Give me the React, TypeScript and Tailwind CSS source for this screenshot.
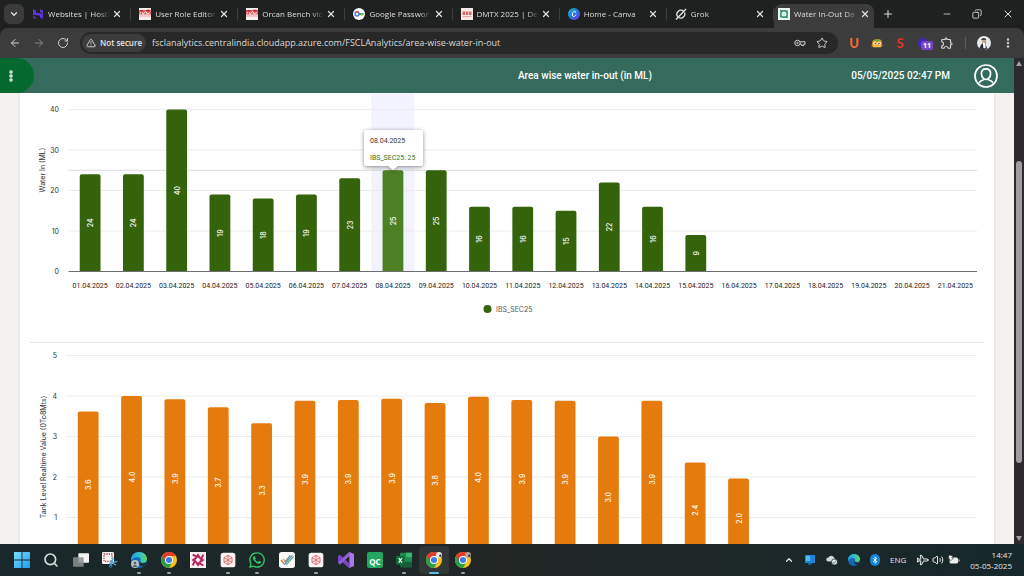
import React from 'react';
import {
  ArrowLeft,
  ArrowRight,
  ChevronDown,
  ChevronUp,
  Copy,
  EllipsisVertical,
  Minus,
  Plane,
  Plus,
  RotateCw,
  Search,
  Star,
  TriangleAlert,
  Volume2,
  X,
} from 'lucide-react';
import { FaBluetoothB, FaWhatsapp } from 'react-icons/fa';
import { MdOutlineExtension } from 'react-icons/md';

interface IconProps {
  className?: string;
}

/* ---------- icons ---------- */

const HostingerIcon: React.FC<IconProps> = ({ className }) => (
  <svg viewBox="0 0 24 24" className={className}>
    <path d="M2 2l6 3v5h7l6 4H2zM22 22l-6-3v-4H9l-6-4h19z" fill="#5b35d5" />
    <path d="M16 2l6 3v6l-6-3zM2 16l6 3v3l-6-3z" fill="#5b35d5" />
  </svg>
);

const OrcanIcon: React.FC<IconProps> = ({ className }) => (
  <svg viewBox="0 0 24 24" className={className}>
    <rect width="24" height="24" fill="#f7eeee" />
    <path d="M0 4h24v9H0z" fill="#e25a5a" />
    <path d="M2 11c2-6 5-6 5-2s3 3 4 0 4-2 4 1 4 1 7-1" stroke="#fff" strokeWidth="2" fill="none" />
    <path d="M3 6h5M15 5h6" stroke="#c01d1d" strokeWidth="3" />
    <path d="M0 15h24v2H0z" fill="#eda3a3" />
  </svg>
);

const PasswordIcon: React.FC<IconProps> = ({ className }) => (
  <svg viewBox="0 0 24 24" className={className}>
    <circle cx="12" cy="12" r="12" fill="#fff" />
    <circle cx="8" cy="12" r="4" fill="none" stroke="#4285f4" strokeWidth="3" />
    <path d="M5 8.500a5 5 0 0 1 6 0" stroke="#ea4335" strokeWidth="3" fill="none" />
    <path d="M12 12h9" stroke="#34a853" strokeWidth="4" />
    <path d="M17 12v4" stroke="#fbbc05" strokeWidth="3" />
  </svg>
);

const DmtxIcon: React.FC<IconProps> = ({ className }) => (
  <svg viewBox="0 0 24 24" className={className}>
    <rect width="24" height="24" fill="#f7e9e7" />
    <path d="M3 7h5v7H3zM9.500 7h5v7h-5zM16 7h5v7h-5z" fill="#dc6a66" />
    <path d="M3 17h18" stroke="#e6a8a4" strokeWidth="2" />
  </svg>
);

const CanvaIcon: React.FC<IconProps> = ({ className }) => (
  <svg viewBox="0 0 24 24" className={className}>
    <defs>
      <linearGradient id="canva" x1="0" y1="0" x2="1" y2="1">
        <stop offset="0" stopColor="#12bfd0" />
        <stop offset="0.5" stopColor="#2776e0" />
        <stop offset="1" stopColor="#7a2be6" />
      </linearGradient>
    </defs>
    <circle cx="12" cy="12" r="12" fill="url(#canva)" />
    <path d="M15.500 9c.8-3-3.500-3.500-5.500 0s-2 8 1.500 8c2 0 3.500-1.500 4.300-3" stroke="#fff" strokeWidth="2" fill="none" strokeLinecap="round" />
  </svg>
);

const GrokIcon: React.FC<IconProps> = ({ className }) => (
  <svg viewBox="0 0 24 24" className={className} fill="none" stroke="#e4e4e4" strokeWidth="2.600">
    <path d="M17 6.500A8 8 0 0 0 5.500 17.500M7.500 19A8 8 0 0 0 19 9" />
    <path d="M2 23L22 2" />
  </svg>
);

const WaterIcon: React.FC<IconProps> = ({ className }) => (
  <svg viewBox="0 0 24 24" className={className}>
    <rect width="24" height="24" fill="#eef6f3" />
    <circle cx="12" cy="12" r="6.500" fill="none" stroke="#2f8f6d" strokeWidth="3" />
    <path d="M4 5l4 1M20 19l-4-1M19 5l-2 3M5 19l2-3" stroke="#2f8f6d" strokeWidth="3" />
    <circle cx="12" cy="12" r="3" fill="#cfe8df" />
  </svg>
);

const KeyIcon: React.FC<IconProps> = ({ className }) => (
  <svg viewBox="0 0 24 16" className={className} fill="none" stroke="currentColor" strokeWidth="2">
    <circle cx="7" cy="8" r="5.500" />
    <circle cx="7" cy="8" r="1.500" />
    <path d="M12.500 5.500H22v5h-2.500V13h-4v-2.500h-3" />
  </svg>
);

const OrangeFaceIcon: React.FC<IconProps> = ({ className }) => (
  <svg viewBox="0 0 24 24" className={className}>
    <path d="M3 8c2-4 15-5 18-1l2 12H1z" fill="#f08a24" />
    <path d="M4 8c3-4 13-4 17-1-4 2-12 2-17 1z" fill="#6fae3c" />
    <circle cx="8" cy="13" r="4" fill="#ffe9b0" />
    <circle cx="16" cy="13" r="4" fill="#ffe9b0" />
    <circle cx="9" cy="13" r="1.700" fill="#b3361c" />
    <circle cx="16" cy="13" r="1.700" fill="#b3361c" />
    <path d="M4 19h16" stroke="#f7c948" strokeWidth="3" />
  </svg>
);

const AvatarIcon: React.FC<IconProps> = ({ className }) => (
  <svg viewBox="0 0 24 24" className={className}>
    <circle cx="12" cy="12" r="12" fill="#e6e8ec" />
    <path d="M4 21a12 12 0 0 0 14 1l-4-8 2-3-6 1-3 3z" fill="#2b2f3d" />
    <path d="M10 12h4l1 9h-4z" fill="#fff" />
    <circle cx="12" cy="8" r="4" fill="#c8a98e" />
    <path d="M7 7c1-5 8-5 9 0z" fill="#4a3a33" />
  </svg>
);

const UserIcon: React.FC<IconProps> = ({ className }) => (
  <svg viewBox="0 0 24 24" className={className} fill="none" stroke="#fff" strokeWidth="1.700">
    <circle cx="12" cy="12" r="11" />
    <path d="M12 4.800c-3 0-4.600 2-4.600 4.800 0 2 .8 3.700 2 4.700v1.500c-2 .6-3.600 1.400-4.400 3.200M12 4.800c3 0 4.600 2 4.600 4.800 0 2-.8 3.700-2 4.700v1.500c2 .6 3.600 1.400 4.400 3.200M9.400 14.300c1.500 1.300 3.700 1.300 5.200 0" />
  </svg>
);

const WindowsIcon: React.FC<IconProps> = ({ className }) => (
  <svg viewBox="0 0 24 24" className={className}>
    <defs>
      <linearGradient id="win" x1="0" y1="0" x2="1" y2="1">
        <stop offset="0" stopColor="#7fdcfb" />
        <stop offset="1" stopColor="#1c9df0" />
      </linearGradient>
    </defs>
    <path d="M0 0h11.300v11.300H0zM12.700 0H24v11.300H12.700zM0 12.700h11.300V24H0zM12.700 12.700H24V24H12.700z" fill="url(#win)" />
  </svg>
);

const TaskViewIcon: React.FC<IconProps> = ({ className }) => (
  <svg viewBox="0 0 24 24" className={className}>
    <rect x="8" y="2" width="16" height="14" rx="1" fill="#f2f2f2" />
    <rect x="0" y="8" width="16" height="14" rx="1" fill="#8b8f90" fillOpacity="0.85" />
  </svg>
);

const SnipIcon: React.FC<IconProps> = ({ className }) => (
  <svg viewBox="0 0 24 24" className={className}>
    <rect x="0" y="0" width="18" height="18" rx="2" fill="#f3f3f3" />
    <rect x="3" y="3" width="12" height="11" fill="none" stroke="#c94343" strokeWidth="2" strokeDasharray="2 1.500" />
    <path d="M13 21l4-13M21 20l-9-7M11 17l12-3" stroke="#4fa6cf" strokeWidth="2" />
    <circle cx="13" cy="21" r="2" fill="none" stroke="#2f86b8" strokeWidth="1.500" />
  </svg>
);

const EdgeIcon: React.FC<IconProps> = ({ className }) => (
  <svg viewBox="0 0 24 24" className={className}>
    <defs>
      <linearGradient id="edge" x1="0" y1="0" x2="1" y2="0">
        <stop offset="0" stopColor="#2a9be8" />
        <stop offset="0.6" stopColor="#35c3c4" />
        <stop offset="1" stopColor="#66d650" />
      </linearGradient>
    </defs>
    <circle cx="12" cy="12" r="12" fill="#1267b8" />
    <path d="M0 12C0 5 5 0 12 0s12 5 12 10c0 4-3 6-6 6s-5-1-4-3c1-2 0-5-4-5-5 0-9 3-10 6z" fill="url(#edge)" />
    <path d="M14 13c-1 2 1 4.500 5 4 1.500 0 3-.5 4-1.200-1 3-3 5.200-5 6-5-1-7-5-4-8.800z" fill="#1b2728" fillOpacity="0.9" />
  </svg>
);

const ProfileEdgeIcon: React.FC<IconProps> = ({ className }) => (
  <span className="relative">
    <EdgeIcon className={className} />
    <svg viewBox="0 0 8 8" className="absolute bottom-0 left-0 size-2">
      <circle cx="4" cy="4" r="4" fill="#b9bfc4" />
      <circle cx="4" cy="3" r="1.300" fill="#5c646b" />
      <path d="M2 7c0-3 4-3 4 0z" fill="#5c646b" />
    </svg>
  </span>
);

const ChromeIcon: React.FC<IconProps> = ({ className }) => (
  <svg viewBox="0 0 24 24" className={className}>
    <circle cx="12" cy="12" r="12" fill="#fbc116" />
    <path d="M12 12L1.600 6A12 12 0 0 0 12 24l5.200-9z" fill="#28a04b" />
    <path d="M12 6h10.400A12 12 0 0 0 1.600 6l5.200 9z" fill="#e33b2e" />
    <circle cx="12" cy="12" r="6" fill="#fff" />
    <circle cx="12" cy="12" r="4.600" fill="#3b7ded" />
  </svg>
);

const ProfileChromeIcon: React.FC<IconProps & { tone: string }> = ({ className, tone }) => (
  <span className="relative">
    <ChromeIcon className={className} />
    <svg viewBox="0 0 8 8" className="absolute top-0 right-0 size-1.5">
      <circle cx="4" cy="4" r="4" fill={tone} />
      <path d="M4 4l3-1 0 3-2 1z" fill="#3d3434" />
    </svg>
  </span>
);

const PinwheelIcon: React.FC<IconProps> = ({ className }) => (
  <svg viewBox="0 0 24 24" className={className}>
    <rect width="24" height="24" fill="#f8eff3" />
    <path d="M12 2l4 6 6 4-6 4-4 6-4-6-6-4 6-4z" fill="#b82560" />
    <path d="M12 8l4 4-4 4-4-4z" fill="#f8eff3" />
    <path d="M4 4l6 3M20 4l-3 6M4 20l3-6M20 20l-6-3" stroke="#b82560" strokeWidth="3" />
  </svg>
);

const RedCubeIcon: React.FC<IconProps> = ({ className }) => (
  <svg viewBox="0 0 24 24" className={className}>
    <rect x="1" y="1" width="22" height="22" rx="4" fill="#f7f3f3" />
    <path d="M12 5l6 3.500v7L12 19l-6-3.500v-7zM12 5v14M6 8.500l12 7M18 8.500l-12 7" fill="none" stroke="#df6b70" strokeWidth="1.400" />
  </svg>
);

const TickIcon: React.FC<IconProps> = ({ className }) => (
  <svg viewBox="0 0 24 24" className={className} fill="none" strokeWidth="2">
    <rect width="24" height="24" rx="4" fill="#fafafa" />
    <path d="M3 12l5 6" stroke="#e2704b" />
    <path d="M6 10l4 5" stroke="#efb04e" />
    <path d="M8 19L20 5" stroke="#4a8fc4" />
    <path d="M11 19L22 7" stroke="#5fb36c" />
    <path d="M9 15l8-10" stroke="#7b8c9c" />
  </svg>
);

const VisualStudioIcon: React.FC<IconProps> = ({ className }) => (
  <svg viewBox="0 0 24 24" className={className}>
    <path d="M17 0l7 3v18l-7 3L4 12z" fill="#a779e8" />
    <path d="M17 6v12l-7-6z" fill="#1b2728" />
    <path d="M0 6l3-2 15 14-1 6L4 13l-1 4-3-2z" fill="#7a45c4" />
    <path d="M0 16l3 3L18 5l-1-5z" fill="#8f5ed6" />
  </svg>
);

const ExcelIcon: React.FC<IconProps> = ({ className }) => (
  <svg viewBox="0 0 24 24" className={className}>
    <rect x="6" y="1" width="18" height="22" rx="2" fill="#1f8a50" />
    <path d="M15 1h9v7h-9z" fill="#35b873" />
    <path d="M6 15h18v8H6z" fill="#155c37" />
    <rect x="0" y="6" width="13" height="13" rx="1" fill="#0f6b3a" />
    <path d="M4 9l5 7M9 9l-5 7" stroke="#fff" strokeWidth="1.800" />
  </svg>
);

const CloudIcon: React.FC<IconProps> = ({ className }) => (
  <svg viewBox="0 0 24 24" className={className}>
    <path d="M4 15a4 4 0 0 1 1-8 6 6 0 0 1 11 0l2 2-4 6z" fill="#d4d7d8" />
    <circle cx="17" cy="16" r="6" fill="#eceff0" stroke="#1b2728" strokeWidth="1.500" />
    <path d="M14 16l2.500 3L20 13" stroke="#4492b8" strokeWidth="2" fill="none" />
  </svg>
);

const MonitorIcon: React.FC<IconProps> = ({ className }) => (
  <svg viewBox="0 0 24 24" className={className}>
    <path d="M2 2h20v16H2z" fill="#1d84d8" />
    <path d="M4 4h8v10H4z" fill="#51bdf4" />
    <path d="M7 18h10l-3 4H9z" fill="#155e9c" />
  </svg>
);

const BatteryIcon: React.FC<IconProps> = ({ className }) => (
  <svg viewBox="0 0 24 24" className={className}>
    <rect x="3" y="7" width="17" height="12" rx="3" fill="#eee" />
    <path d="M21 11h2v4h-2z" fill="#eee" />
    <path d="M2 2l8 2-3 4 4 1-8 6 1-5-3-1z" fill="#fff" stroke="#1b2728" />
  </svg>
);

/* ---------- browser chrome ---------- */

const tabs = [
  { title: 'Websites | Hosti', Icon: HostingerIcon },
  { title: 'User Role Editor', Icon: OrcanIcon },
  { title: 'Orcan Bench vic', Icon: OrcanIcon },
  { title: 'Google Passwor', Icon: PasswordIcon },
  { title: 'DMTX 2025 | Del', Icon: DmtxIcon },
  { title: 'Home - Canva', Icon: CanvaIcon },
  { title: 'Grok', Icon: GrokIcon },
];

const tabTitle =
  'flex-1 overflow-hidden text-left text-[8px] leading-3 whitespace-nowrap [mask-image:linear-gradient(to_right,black_80%,transparent)]';

const TabStrip: React.FC = () => (
  <div className="flex h-7 items-center bg-[#1f2020] text-[#dedede]">
    <button aria-label="Search tabs" className="ml-1 flex size-5 items-center justify-center rounded-md bg-[#3b3b3b]">
      <ChevronDown className="size-2.5" strokeWidth={3} />
    </button>
    <div role="tablist" className="flex h-full min-w-0 flex-1 items-center">
      {tabs.map(({ title, Icon }, i) => (
        <div key={title + i} className="flex min-w-0 flex-[90] items-center gap-0.5 border-r border-[#3d3d3d] px-2">
          <button role="tab" aria-selected="false" className="flex min-w-0 flex-1 items-center gap-1">
            <Icon className="size-3 shrink-0" />
            <span className={tabTitle}>{title}</span>
          </button>
          <button aria-label={`Close ${title}`}>
            <X className="size-2.5" strokeWidth={3} />
          </button>
        </div>
      ))}
      <div className="flex h-6 min-w-0 flex-[92] items-center gap-0.5 self-end rounded-t-lg bg-[#3c3c3c] px-1 pb-1">
        <button role="tab" aria-selected="true" className="flex min-w-0 flex-1 items-center gap-1">
          <WaterIcon className="size-3 shrink-0" />
          <span className={tabTitle}>Water In-Out Da</span>
        </button>
        <button aria-label="Close Water In-Out">
          <X className="size-2.5" strokeWidth={3} />
        </button>
      </div>
    </div>
    <button aria-label="New tab" className="ml-2">
      <Plus className="size-3" strokeWidth={2} />
    </button>
    <div className="ml-12 flex items-center gap-5 pr-2.5">
      <button aria-label="Minimize">
        <Minus className="size-2.5" />
      </button>
      <button aria-label="Restore">
        <Copy className="size-2.5 -scale-x-100" />
      </button>
      <button aria-label="Close window">
        <X className="size-3" />
      </button>
    </div>
  </div>
);

const Toolbar: React.FC = () => (
  <div className="bg-[#1f2020]">
    <div className="flex h-[30px] items-center rounded-t-lg bg-[#3c3c3c] text-[#d0d0d0]">
      <div className="flex w-20 items-center gap-3 pl-[9px]">
        <button aria-label="Back">
          <ArrowLeft className="size-3" strokeWidth={2} />
        </button>
        <button aria-label="Forward" className="text-[#858585]">
          <ArrowRight className="size-3" strokeWidth={2} />
        </button>
        <button aria-label="Reload">
          <RotateCw className="size-3" strokeWidth={2} />
        </button>
      </div>
      <div className="flex h-[22px] flex-1 items-center rounded-full bg-[#282828] pr-2.5 pl-0.5">
        <button className="flex h-[18px] items-center gap-1 rounded-full bg-[#3c3c3c] px-1 text-[8px] font-semibold whitespace-nowrap text-[#e3e3e3]">
          <TriangleAlert className="size-2.5" strokeWidth={2} />
          Not secure
        </button>
        <input
          aria-label="Address"
          defaultValue="fsclanalytics.centralindia.cloudapp.azure.com/FSCLAnalytics/area-wise-water-in-out"
          className="ml-1.5 min-w-0 flex-1 bg-transparent text-[9px] text-[#d8d8d8] outline-none"
        />
        <button aria-label="Passwords">
          <KeyIcon className="h-2 w-3" />
        </button>
        <button aria-label="Bookmark" className="ml-2.5">
          <Star className="size-3" />
        </button>
      </div>
      <div className="flex items-center gap-[11px] px-2.5">
        <button className="w-3 font-['Lato'] text-[13px] leading-4 font-black text-[#ef6a3a]">U</button>
        <button aria-label="Extension">
          <OrangeFaceIcon className="size-3" />
        </button>
        <button className="w-3 font-['Lato'] text-[13px] leading-4 font-black text-[#d9352a]">S</button>
        <button className="relative size-3">
          <svg viewBox="0 0 12 12" className="size-3">
            <path d="M6 0l6 5-2 5H2L0 5z" fill="#4527b8" />
          </svg>
          <span className="absolute top-1 left-1 rounded-xs bg-[#7446c8] px-0.5 text-[7px] leading-[9px] font-bold text-white">11</span>
        </button>
        <button aria-label="Extensions">
          <MdOutlineExtension className="size-3.5" />
        </button>
        <span className="h-3 w-px bg-[#5e5e5e]" />
        <button aria-label="Profile">
          <AvatarIcon className="size-3.5" />
        </button>
        <button aria-label="Browser menu">
          <EllipsisVertical className="size-3" strokeWidth={3} />
        </button>
      </div>
    </div>
  </div>
);

/* ---------- dashboard ---------- */

const AppHeader: React.FC = () => (
  <header className="flex h-[35px] shrink-0 items-center bg-[#346b5c] font-['Roboto',sans-serif] text-[10px] font-medium text-white">
    <button aria-label="Menu" className="flex h-full w-[34px] items-center rounded-r-full bg-[#04682f] pl-1">
      <EllipsisVertical className="size-3.5" strokeWidth={4} />
    </button>
    <h1 className="ml-auto">Area wise water in-out (in ML)</h1>
    <div className="flex w-[362px] items-center justify-end gap-6 pr-4">
      <time>05/05/2025 02:47 PM</time>
      <button aria-label="Account">
        <UserIcon className="size-6" />
      </button>
    </div>
  </header>
);

const DAYS = 21;
const STEP = 40.5;

const barPath = (x: number, top: number, width: number, bottom: number) =>
  `M${x} ${bottom}V${top + 2}q0 -2 2 -2H${x + width - 2}q2 0 2 2V${bottom}z`;

const dates = Array.from({ length: DAYS }, (_, i) => `${String(i + 1).padStart(2, '0')}.04.2025`);
const waterIn = [24, 24, 40, 19, 18, 19, 23, 25, 25, 16, 16, 15, 22, 16, 9];
const tankLevel = [3.62, 4, 3.92, 3.72, 3.33, 3.88, 3.9, 3.93, 3.83, 3.98, 3.9, 3.88, 3, 3.88, 2.36, 1.96];
const hovered = 7;

interface BarsProps {
  values: number[];
  left: number;
  slot: number;
  zero: number;
  unit: number;
  color: string;
  activeColor?: string;
  digits: number;
}

const Bars: React.FC<BarsProps> = ({ values, left, slot, zero, unit, color, activeColor, digits }) => (
  <>
    {values.map((value, i) => {
      const cx = left + slot * (i + 0.5);
      const top = zero - value * unit;
      const mid = (top + zero) / 2;
      return (
        <g key={i}>
          <path d={barPath(cx - 10.4, top, 20.8, zero)} fill={activeColor && i === hovered ? activeColor : color} />
          <text x={cx} y={mid} transform={`rotate(-90 ${cx} ${mid})`} dy="3" textAnchor="middle" fontSize="7" fontWeight="500" fill="#fff">
            {value.toFixed(digits)}
          </text>
        </g>
      );
    })}
  </>
);

const WaterInChart: React.FC = () => {
  const left = 38.5;
  const right = 947;
  const zero = 178.5;
  const slot = (right - left) / DAYS;
  const hoverX = left + slot * (hovered + 0.5);
  const hoverY = zero - (waterIn[hovered] * STEP) / 10;

  return (
    <svg viewBox="0 0 954 249" className="block w-full" role="img" aria-label="Water In (ML)">
      <rect x={hoverX - slot / 2} y="0" width={slot} height={zero} fill="#f2f3fe" />
      {[40, 30, 20, 10].map((tick) => (
        <path key={tick} d={`M${left} ${zero - (tick * STEP) / 10}H${right}`} stroke="#ececec" />
      ))}
      {[40, 30, 20, 10, 0].map((tick) => (
        <text key={tick} x="29" y={zero - (tick * STEP) / 10 + 2.5} textAnchor="end" fontSize="7" fill="#333">
          {tick}
        </text>
      ))}
      <text x="15" y="77" transform="rotate(-90 15 77)" textAnchor="middle" fontSize="7" fill="#333">
        Water In (ML)
      </text>
      <path d={`M${left} ${hoverY}H${right}`} stroke="#dcdcdc" />
      <Bars values={waterIn} left={left} slot={slot} zero={zero} unit={STEP / 10} color="#34630b" activeColor="#4d7f25" digits={0} />
      <path d={`M${left} ${zero}H${right}`} stroke="#6e6e6e" />
      <g className="font-['Roboto',sans-serif]">
        {dates.map((date, i) => (
          <text key={date} x={left + slot * (i + 0.5)} y="195" textAnchor="middle" fontSize="7" fill="#222">
            {date}
          </text>
        ))}
      </g>
      <circle cx="457.500" cy="216" r="4" fill="#34630b" />
      <text x="466" y="219" fontSize="7" fill="#555">
        IBS_SEC25
      </text>
      <g className="drop-shadow-[0_1px_2px_rgba(0,0,0,0.45)]">
        <path d={`M336 37h55q2 0 2 2v32q0 2 -2 2H${hoverX + 5}L${hoverX} 77L${hoverX - 5} 73H336q-2 0 -2 -2v-32q0 -2 2 -2z`} fill="#fff" />
      </g>
      <g className="font-['Roboto',sans-serif]">
        <text x="340" y="49.500" fontSize="7" fill="#333">
          {dates[hovered]}
        </text>
        <text x="340" y="66.500" fontSize="7" fill="#34741b">
          IBS_SEC25: {waterIn[hovered]}
        </text>
      </g>
    </svg>
  );
};

const TankLevelChart: React.FC = () => {
  const left = 36.5;
  const right = 947;
  const zero = 215;
  const slot = (right - left) / DAYS;

  return (
    <svg viewBox="0 0 954 260" className="block w-full" role="img" aria-label="Tank Level Realtime Value">
      {[5, 4, 3, 2, 1].map((tick) => (
        <g key={tick}>
          <path d={`M${left} ${zero - tick * STEP}H${right}`} stroke="#ececec" />
          <text x="27" y={zero - tick * STEP + 2.5} textAnchor="end" fontSize="7" fill="#333">
            {tick}
          </text>
        </g>
      ))}
      <text x="16" y="114" transform="rotate(-90 16 114)" textAnchor="middle" fontSize="7" fill="#333">
        Tank Level Realtime Value (0To8Mts)
      </text>
      <Bars values={tankLevel} left={left} slot={slot} zero={zero} unit={STEP} color="#e47b0c" digits={1} />
    </svg>
  );
};

const Scrollbar: React.FC = () => (
  <div className="flex w-2.5 shrink-0 flex-col items-center bg-[#2c2a2c]">
    <svg viewBox="0 0 10 12" className="h-3 w-2.5">
      <path d="M5 3l3 5H2z" fill="#9f9d9f" />
    </svg>
    <div className="flex-[91]" />
    <div className="w-1.5 flex-[302] rounded-full bg-[#9f9d9f]" />
    <div className="flex-[69]" />
    <svg viewBox="0 0 10 12" className="h-3 w-2.5">
      <path d="M5 9l3-5H2z" fill="#9f9d9f" />
    </svg>
  </div>
);

/* ---------- taskbar ---------- */

const QcIcon: React.FC = () => (
  <span className="flex size-4 items-end justify-center rounded-xs bg-[#22a862] text-[8px] leading-3 font-bold text-white">QC</span>
);

const apps: { name: string; icon: React.ReactNode; state?: 'open' | 'active' }[] = [
  { name: 'Start', icon: <WindowsIcon className="size-4" /> },
  { name: 'Search', icon: <Search className="size-4 text-[#d5dadb]" strokeWidth={2.5} /> },
  { name: 'Task view', icon: <TaskViewIcon className="size-4" /> },
  { name: 'Snipping Tool', icon: <SnipIcon className="size-4" /> },
  { name: 'Edge', icon: <ProfileEdgeIcon className="size-4" />, state: 'open' },
  { name: 'Chrome', icon: <ChromeIcon className="size-4" />, state: 'open' },
  { name: 'Designer', icon: <PinwheelIcon className="size-4" /> },
  { name: 'Project', icon: <RedCubeIcon className="size-4" />, state: 'open' },
  { name: 'WhatsApp', icon: <FaWhatsapp className="size-[18px] text-[#2fd06a]" />, state: 'open' },
  { name: 'Tasks', icon: <TickIcon className="size-4" /> },
  { name: 'Project 2', icon: <RedCubeIcon className="size-4" />, state: 'open' },
  { name: 'Visual Studio', icon: <VisualStudioIcon className="size-4" /> },
  { name: 'QC', icon: <QcIcon /> },
  { name: 'Excel', icon: <ExcelIcon className="size-4" />, state: 'open' },
  { name: 'Chrome work profile', icon: <ProfileChromeIcon className="size-4" tone="#e9e9ec" />, state: 'active' },
  { name: 'Chrome second profile', icon: <ProfileChromeIcon className="size-4" tone="#b9a498" />, state: 'open' },
];

const Taskbar: React.FC = () => (
  <footer className="flex h-8 shrink-0 items-center justify-between bg-linear-to-r from-[#18282b] via-[#212625] to-[#16282b] pr-3 pl-[7px] text-[#e6e6e6]">
    <div className="flex w-[471px]">
      {apps.map(({ name, icon, state }) => (
        <button
          key={name}
          aria-label={name}
          className={`relative flex h-7 flex-1 items-center justify-center rounded-sm ${state === 'active' ? 'bg-white/8' : ''}`}
        >
          {icon}
          {state === 'open' && <span className="absolute bottom-0 h-0.5 w-1 rounded-full bg-[#9aa0a0]" />}
          {state === 'active' && <span className="absolute bottom-0 h-0.5 w-2.5 rounded-full bg-[#5fc0e6]" />}
        </button>
      ))}
    </div>
    <div className="flex items-center gap-2.5">
      <button aria-label="Hidden icons">
        <ChevronUp className="size-2.5" strokeWidth={3} />
      </button>
      <MonitorIcon className="size-3" />
      <CloudIcon className="size-3" />
      <EdgeIcon className="size-3" />
      <span className="flex h-3 w-2.5 items-center justify-center rounded-full bg-[#1583dc]">
        <FaBluetoothB className="size-2 text-white" />
      </span>
      <button className="text-[8px]">ENG</button>
      <button aria-label="Quick settings" className="flex items-center gap-1">
        <Plane className="size-3 rotate-45" />
        <Volume2 className="size-3" />
        <BatteryIcon className="size-3" />
      </button>
      <button className="text-right text-[8px] leading-[11px]">
        <time className="block">14:47</time>
        <time className="block">05-05-2025</time>
      </button>
    </div>
  </footer>
);

const App: React.FC = () => (
  <div className="flex h-screen flex-col overflow-hidden bg-white font-['Open_Sans','Noto_Sans',sans-serif]">
    <TabStrip />
    <Toolbar />
    <div className="flex min-h-0 flex-1">
      <div className="flex min-w-0 flex-1 flex-col bg-[#f3f2ee] font-['Inter',sans-serif]">
        <AppHeader />
        <main className="min-h-0 flex-1 overflow-hidden px-5">
          <section className="bg-white px-2.5 shadow-sm">
            <WaterInChart />
            <hr className="border-[#e4e4e4]" />
            <TankLevelChart />
          </section>
        </main>
      </div>
      <Scrollbar />
    </div>
    <Taskbar />
  </div>
);

export default App;
